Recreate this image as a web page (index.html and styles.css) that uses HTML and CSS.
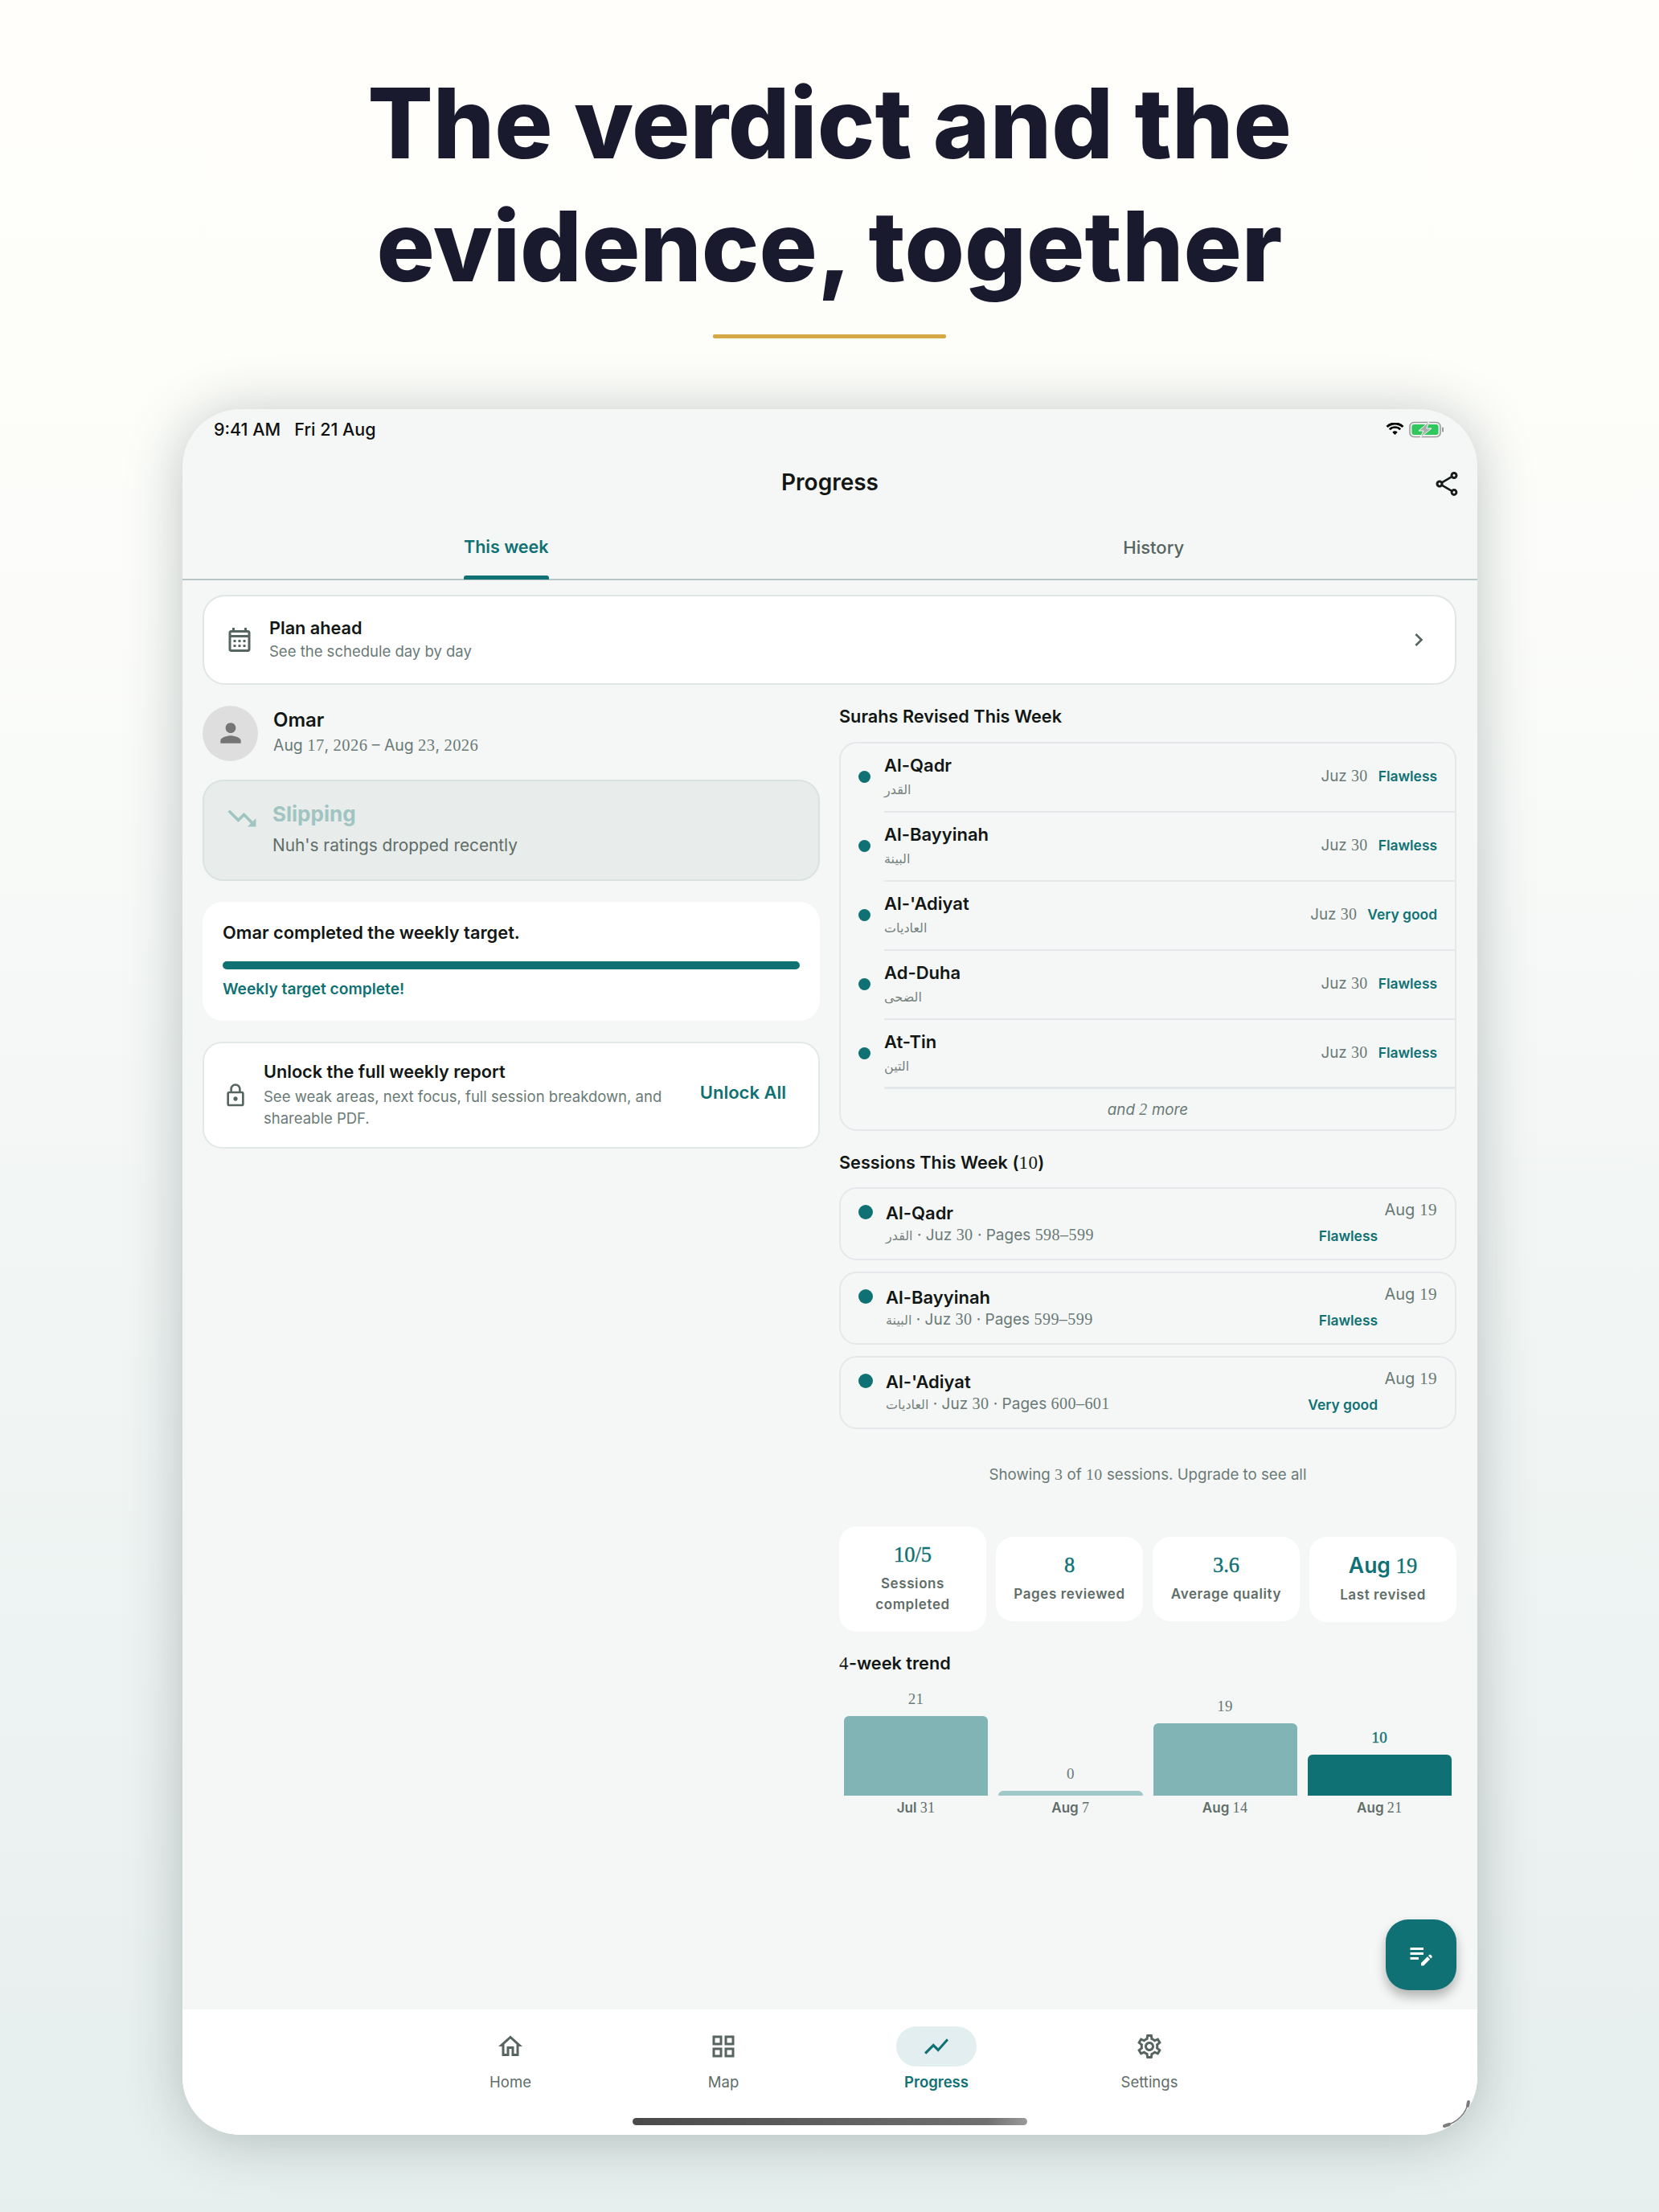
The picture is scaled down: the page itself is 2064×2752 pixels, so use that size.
FILE: index.html
```html
<!DOCTYPE html>
<html lang="en">
<head>
<meta charset="utf-8">
<title>Progress</title>
<link rel="stylesheet" href="styles.css">
</head>
<body>
<header class="hero">
  <h1 class="headline">The verdict and the<br>evidence, together</h1>
  <div class="rule"></div>
</header>
<main class="tablet">
  <div class="status">
    <span class="status-time">9:41 AM&nbsp;&nbsp;&nbsp;Fri 21 Aug</span>
    <span class="status-icons">
      <svg class="wifi" viewBox="0 0 24 17" width="23" height="16"><path d="M12 16l-3.400-3.600a4.800 4.800 0 0 1 6.800 0zM5.900 9.800l-2-2a11.400 11.400 0 0 1 16.200 0l-2 2a8.600 8.600 0 0 0-12.200 0zM2.600 6.400L.3 4.200a16.600 16.600 0 0 1 23.400 0l-2.300 2.200a13.400 13.400 0 0 0-18.800 0z" fill="#000"/></svg>
      <svg class="battery" viewBox="0 0 44 21" width="44" height="21"><rect x="1" y="1.500" width="38" height="18" rx="5" fill="none" stroke="#9a9a9a" stroke-width="1.600"/><rect x="3.400" y="3.900" width="33.200" height="13.200" rx="3" fill="#30c75e"/><rect x="41" y="7.500" width="2" height="6" rx="1" fill="#9a9a9a"/><path d="M25 0.500L12 12h6l-4 8.500L28 9h-6z" fill="#a9b0ac" stroke="#f5f7f6" stroke-width="1"/></svg>
    </span>
  </div>
  <div class="appbar">
    <span class="appbar-title">Progress</span>
    <svg class="share" viewBox="0 0 24 24" width="36" height="36" fill="#171c1b"><path d="M18 16.080c-.76 0-1.440.3-1.960.77L8.910 12.700c.05-.23.09-.46.09-.7s-.04-.47-.09-.7l7.050-4.110c.54.5 1.250.81 2.040.81 1.660 0 3-1.340 3-3s-1.340-3-3-3-3 1.340-3 3c0 .24.04.47.09.7L8.040 9.810C7.500 9.310 6.790 9 6 9c-1.660 0-3 1.340-3 3s1.340 3 3 3c.79 0 1.500-.31 2.040-.81l7.120 4.160c-.05.21-.08.43-.08.65 0 1.610 1.310 2.920 2.920 2.920s2.920-1.310 2.920-2.920c0-1.610-1.310-2.920-2.920-2.920zM18 4c.55 0 1 .45 1 1s-.45 1-1 1-1-.45-1-1 .45-1 1-1zM6 13c-.55 0-1-.45-1-1s.45-1 1-1 1 .45 1 1-.45 1-1 1zm12 7.020c-.55 0-1-.45-1-1s.45-1 1-1 1 .45 1 1-.45 1-1 1z"/></svg>
  </div>
  <nav class="tabs">
    <div class="tab tab-on"><span class="tab-label">This week<i class="tab-bar"></i></span></div>
    <div class="tab"><span class="tab-label">History</span></div>
  </nav>
  <section class="content">
    <a class="plan">
      <svg class="plan-icon" viewBox="0 0 24 24" width="36" height="36" fill="#56655f"><path d="M19 4h-1V2h-2v2H8V2H6v2H5c-1.100 0-2 .9-2 2v14c0 1.100.9 2 2 2h14c1.100 0 2-.9 2-2V6c0-1.100-.9-2-2-2zm0 16H5V10h14v10zm0-12H5V6h14v2zM9 14H7v-2h2v2zm4 0h-2v-2h2v2zm4 0h-2v-2h2v2zm-8 4H7v-2h2v2zm4 0h-2v-2h2v2zm4 0h-2v-2h2v2z"/></svg>
      <span class="plan-text">
        <span class="plan-title">Plan ahead</span>
        <span class="plan-sub">See the schedule day by day</span>
      </span>
      <svg class="chev" viewBox="0 0 24 24" width="32" height="32" fill="#56655f"><path d="M10 6L8.590 7.410 13.170 12l-4.580 4.590L10 18l6-6z"/></svg>
    </a>
    <div class="columns">
      <div class="col-left">
        <div class="person">
          <span class="avatar"><svg viewBox="0 0 24 24" width="38" height="38" fill="#757575"><path d="M12 12c2.210 0 4-1.790 4-4s-1.790-4-4-4-4 1.790-4 4 1.790 4 4 4zm0 2c-2.670 0-8 1.340-8 4v2h16v-2c0-2.660-5.330-4-8-4z"/></svg></span>
          <span class="person-text">
            <span class="person-name">Omar</span>
            <span class="person-date">Aug <b class="num">17</b>, <b class="num">2026</b> – Aug <b class="num">23</b>, <b class="num">2026</b></span>
          </span>
        </div>
        <div class="slip">
          <svg class="slip-icon" viewBox="0 0 24 24" width="42" height="42" fill="#a0c4c2"><path d="M16 18l2.290-2.290-4.880-4.880-4 4L2 7.410 3.410 6l6 6 4-4 6.300 6.290L22 12v6z"/></svg>
          <div class="slip-text">
            <div class="slip-title">Slipping</div>
            <div class="slip-sub">Nuh's ratings dropped recently</div>
          </div>
        </div>
        <div class="target">
          <div class="target-title">Omar completed the weekly target.</div>
          <div class="target-bar"></div>
          <div class="target-note">Weekly target complete!</div>
        </div>
        <div class="unlock">
          <svg class="lock" viewBox="0 0 24 24" width="32" height="32" fill="#56655f"><path d="M12 17c1.100 0 2-.9 2-2s-.9-2-2-2-2 .9-2 2 .9 2 2 2zm6-9h-1V6c0-2.760-2.240-5-5-5S7 3.240 7 6v2H6c-1.100 0-2 .9-2 2v10c0 1.100.9 2 2 2h12c1.100 0 2-.9 2-2V10c0-1.100-.9-2-2-2zM8.900 6c0-1.710 1.390-3.100 3.100-3.100s3.100 1.390 3.100 3.100v2H8.900V6zM18 20H6V10h12v10z"/></svg>
          <div class="unlock-text">
            <div class="unlock-title">Unlock the full weekly report</div>
            <div class="unlock-sub">See weak areas, next focus, full session breakdown, and shareable PDF.</div>
          </div>
          <span class="unlock-cta">Unlock All</span>
        </div>
      </div>
      <div class="col-right">
        <h2 class="section-title">Surahs Revised This Week</h2>
        <div class="surahs">
          <div class="surah"><i class="dot"></i><div class="surah-text"><div class="surah-name">Al-Qadr</div><div class="surah-ar" dir="rtl">القدر</div></div><span class="juz">Juz <b class="num">30</b></span><span class="grade">Flawless</span></div>
          <div class="surah"><i class="dot"></i><div class="surah-text"><div class="surah-name">Al-Bayyinah</div><div class="surah-ar" dir="rtl">البينة</div></div><span class="juz">Juz <b class="num">30</b></span><span class="grade">Flawless</span></div>
          <div class="surah"><i class="dot"></i><div class="surah-text"><div class="surah-name">Al-'Adiyat</div><div class="surah-ar" dir="rtl">العاديات</div></div><span class="juz">Juz <b class="num">30</b></span><span class="grade">Very good</span></div>
          <div class="surah"><i class="dot"></i><div class="surah-text"><div class="surah-name">Ad-Duha</div><div class="surah-ar" dir="rtl">الضحى</div></div><span class="juz">Juz <b class="num">30</b></span><span class="grade">Flawless</span></div>
          <div class="surah surah-last"><i class="dot"></i><div class="surah-text"><div class="surah-name">At-Tin</div><div class="surah-ar" dir="rtl">التين</div></div><span class="juz">Juz <b class="num">30</b></span><span class="grade">Flawless</span></div>
          <div class="more">and <b class="num">2</b> more</div>
        </div>
        <h2 class="section-title sessions-title">Sessions This Week (<b class="num">10</b>)</h2>
        <div class="sessions">
          <div class="session"><i class="dot dot-lg"></i><div class="session-text"><div class="session-name">Al-Qadr</div><div class="session-sub"><span class="ar">القدر</span> · Juz <b class="num">30</b> · Pages <b class="num">598–599</b></div></div><div class="session-side"><span class="session-date">Aug <b class="num">19</b></span><span class="session-grade">Flawless</span></div></div>
          <div class="session"><i class="dot dot-lg"></i><div class="session-text"><div class="session-name">Al-Bayyinah</div><div class="session-sub"><span class="ar">البينة</span> · Juz <b class="num">30</b> · Pages <b class="num">599–599</b></div></div><div class="session-side"><span class="session-date">Aug <b class="num">19</b></span><span class="session-grade">Flawless</span></div></div>
          <div class="session"><i class="dot dot-lg"></i><div class="session-text"><div class="session-name">Al-'Adiyat</div><div class="session-sub"><span class="ar">العاديات</span> · Juz <b class="num">30</b> · Pages <b class="num">600–601</b></div></div><div class="session-side"><span class="session-date">Aug <b class="num">19</b></span><span class="session-grade">Very good</span></div></div>
        </div>
        <p class="showing">Showing <b class="num">3</b> of <b class="num">10</b> sessions. Upgrade to see all</p>
        <div class="stats">
          <div class="stat"><div class="stat-value stat-digits num">10/5</div><div class="stat-label">Sessions completed</div></div>
          <div class="stat"><div class="stat-value stat-digits num">8</div><div class="stat-label">Pages reviewed</div></div>
          <div class="stat"><div class="stat-value stat-digits num">3.6</div><div class="stat-label">Average quality</div></div>
          <div class="stat"><div class="stat-value">Aug <b class="num stat-digits">19</b></div><div class="stat-label">Last revised</div></div>
        </div>
        <h2 class="section-title trend-title"><b class="num">4</b>-week trend</h2>
        <div class="chart">
          <div class="bar-col"><span class="bar-val num">21</span><div class="bar" style="height:99px"></div><span class="bar-label">Jul <b class="num">31</b></span></div>
          <div class="bar-col"><span class="bar-val num">0</span><div class="bar bar-zero" style="height:6px"></div><span class="bar-label">Aug <b class="num">7</b></span></div>
          <div class="bar-col"><span class="bar-val num">19</span><div class="bar" style="height:90px"></div><span class="bar-label">Aug <b class="num">14</b></span></div>
          <div class="bar-col"><span class="bar-val bar-val-now num">10</span><div class="bar bar-now" style="height:51px"></div><span class="bar-label">Aug <b class="num">21</b></span></div>
        </div>
      </div>
    </div>
    <button class="fab" aria-label="Log session"><svg viewBox="0 0 24 24" width="36" height="36" fill="#fff"><path d="M3 10h11v2H3v-2zm0-2h11V6H3v2zm0 8h7v-2H3v2zm15.010-3.130.71-.71c.39-.39 1.020-.39 1.410 0l.71.71c.39.39.39 1.020 0 1.410l-.71.71-2.120-2.120zm-.71.71-5.300 5.300V21h2.120l5.300-5.300-2.120-2.120z"/></svg></button>
  </section>
  <nav class="bottom">
    <div class="nav-item">
      <span class="nav-icon"><svg viewBox="0 0 24 24" width="36" height="36" fill="#56655f"><path d="M12 5.690l5 4.500V18h-2v-6H9v6H7v-7.810l5-4.500M12 3L2 12h3v8h6v-6h2v6h6v-8h3L12 3z"/></svg></span>
      <span class="nav-label">Home</span>
    </div>
    <div class="nav-item">
      <span class="nav-icon"><svg viewBox="0 0 24 24" width="36" height="36" fill="#56655f"><path d="M3 3v8h8V3H3zm6 6H5V5h4v4zm-6 4v8h8v-8H3zm6 6H5v-4h4v4zm4-16v8h8V3h-8zm6 6h-4V5h4v4zm-6 4v8h8v-8h-8zm6 6h-4v-4h4v4z"/></svg></span>
      <span class="nav-label">Map</span>
    </div>
    <div class="nav-item nav-on">
      <span class="nav-icon"><svg viewBox="0 0 24 24" width="36" height="36" fill="#0f7173"><path d="M3.500 18.490l6-6.010 4 4L22 6.920l-1.410-1.410-7.090 7.970-4-4L2 16.990z"/></svg></span>
      <span class="nav-label">Progress</span>
    </div>
    <div class="nav-item">
      <span class="nav-icon"><svg viewBox="0 0 24 24" width="36" height="36" fill="#56655f"><path d="M19.430 12.980c.04-.32.07-.64.07-.98 0-.34-.03-.66-.07-.98l2.110-1.650c.19-.15.24-.42.12-.64l-2-3.460c-.09-.16-.26-.25-.44-.25-.06 0-.12.01-.17.03l-2.490 1c-.52-.4-1.080-.73-1.690-.98l-.38-2.650C14.460 2.180 14.250 2 14 2h-4c-.25 0-.46.18-.49.42l-.38 2.650c-.61.25-1.170.59-1.690.98l-2.490-1c-.06-.02-.12-.03-.18-.03-.17 0-.34.09-.43.25l-2 3.460c-.13.22-.07.49.12.64l2.110 1.650c-.04.32-.07.65-.07.98 0 .33.03.66.07.98l-2.110 1.650c-.19.15-.24.42-.12.64l2 3.460c.09.16.26.25.44.25.06 0 .12-.01.17-.03l2.490-1c.52.4 1.080.73 1.690.98l.38 2.650c.03.24.24.42.49.42h4c.25 0 .46-.18.49-.42l.38-2.650c.61-.25 1.170-.59 1.690-.98l2.490 1c.06.02.12.03.18.03.17 0 .34-.09.43-.25l2-3.460c.12-.22.07-.49-.12-.64l-2.110-1.650zm-1.980-1.710c.04.31.05.52.05.73 0 .21-.02.43-.05.73l-.14 1.130.89.7 1.080.84-.7 1.210-1.270-.51-1.040-.42-.9.68c-.43.32-.84.56-1.250.73l-1.060.43-.16 1.130-.2 1.350h-1.400l-.19-1.350-.16-1.130-1.060-.43c-.43-.18-.83-.41-1.230-.71l-.91-.7-1.060.43-1.270.51-.7-1.210 1.080-.84.89-.7-.14-1.130c-.03-.31-.05-.54-.05-.74s.02-.43.05-.73l.14-1.130-.89-.7-1.080-.84.7-1.210 1.270.51 1.040.42.9-.68c.43-.32.84-.56 1.250-.73l1.060-.43.16-1.130.2-1.350h1.390l.19 1.350.16 1.130 1.060.43c.43.18.83.41 1.230.71l.91.7 1.060-.43 1.270-.51.7 1.210-1.070.85-.89.7.14 1.130zM12 8c-2.210 0-4 1.790-4 4s1.790 4 4 4 4-1.790 4-4-1.790-4-4-4zm0 6c-1.100 0-2-.9-2-2s.9-2 2-2 2 .9 2 2-.9 2-2 2z"/></svg></span>
      <span class="nav-label">Settings</span>
    </div>
  </nav>
  <div class="home-bar"></div>
  <svg class="corner" viewBox="0 0 36 36" width="36" height="36" fill="none" stroke="#7d7d7d" stroke-linecap="round"><path d="M33 3Q28 26 3 33" stroke-width="1.500"/><path d="M33 3l-1 5M3 33l6-2" stroke-width="4"/></svg>
</main>
</body>
</html>
```
FILE: styles.css
```css
* { box-sizing: border-box; }
html, body { margin: 0; padding: 0; }
body {
  width: 2064px;
  height: 2752px;
  overflow: hidden;
  background: linear-gradient(180deg, #fffefa 0%, #fcfdfa 25%, #f4f7f6 50%, #e6efee 100%);
  font-family: Inter, "Noto Sans", sans-serif;
  color: #121715;
}
.num { font-family: "Liberation Serif", serif; font-size: 1.06em; font-weight: 400; letter-spacing: .4px; }

.hero { display: flex; flex-direction: column; align-items: center; padding-top: 77px; }
.headline {
  margin: 0;
  font-family: Inter, sans-serif;
  font-weight: 800;
  font-size: 120.500px;
  line-height: 153px;
  letter-spacing: 0;
  color: #1a1a2e;
  text-align: center;
}
.rule { width: 290px; height: 5px; margin-top: 33px; border-radius: 2px; background: #d4a843; }

.tablet {
  position: relative;
  width: 1611px;
  height: 2147px;
  margin: 88px 0 0 227px;
  display: flex;
  flex-direction: column;
  border-radius: 72px;
  background: #f5f7f6;
  box-shadow: 0 6px 70px rgba(30, 50, 50, .28);
  overflow: hidden;
}
.status { display: flex; justify-content: space-between; align-items: center; height: 50px; padding: 0 41px 0 39px; }
.status-time { font-size: 21.500px; font-weight: 500; color: #111; }
.status-icons { display: flex; align-items: center; gap: 6px; }

.appbar { position: relative; height: 76px; display: flex; align-items: center; justify-content: center; padding-top: 6px; }
.appbar-title { font-size: 28px; font-weight: 600; color: #121715; }
.share { position: absolute; right: 20px; top: 25px; }

.tabs { display: flex; height: 87px; border-bottom: 2px solid #b9c5c5; }
.tab { flex: 1; display: flex; justify-content: center; padding-top: 33px; font-size: 22px; font-weight: 500; line-height: 27px; color: #56655f; }
.tab-on { color: #0f7173; font-size: 21.500px; font-weight: 600; padding-top: 32px; }
.tab-label { position: relative; height: 54px; }
.tab-bar { position: absolute; left: 0; right: 0; bottom: 0; height: 5px; border-radius: 3px 3px 0 0; background: #0f7173; }

.content { position: relative; flex: 1; padding: 18px 26px 0 25px; min-height: 0; }
.plan {
  display: flex; align-items: center; height: 112px; padding: 0 29px 0 26px;
  background: #fff; border: 2px solid #dfe6e5; border-radius: 28px;
}
.plan-text { display: flex; flex-direction: column; gap: 3px; margin-left: 19px; padding-bottom: 4px; flex: 1; }
.plan-title { font-size: 21.700px; font-weight: 600; line-height: 28px; }
.plan-sub { font-size: 18.500px; line-height: 24px; color: #6a7a76; }

.columns { display: grid; grid-template-columns: 1fr 1fr; gap: 24px; margin-top: 18px; }
.col-left { display: flex; flex-direction: column; }
.col-right { padding-top: 7px; }

.person { display: flex; align-items: center; gap: 19px; height: 70px; margin-top: 7px; }
.avatar { width: 69px; height: 69px; border-radius: 50%; background: #dedede; display: flex; align-items: center; justify-content: center; }
.person-text { display: flex; flex-direction: column; gap: 3px; padding-bottom: 3px; }
.person-name { font-size: 24px; font-weight: 600; line-height: 30px; }
.person-date { font-size: 19.400px; line-height: 26px; color: #6a7a76; }

.slip {
  display: flex; gap: 17px; height: 126px; margin-top: 23px; padding: 25px 26px;
  background: #e8ecea; border: 2px solid #dbe3e1; border-radius: 26px;
}
.slip-icon { flex: none; }
.slip-text { display: flex; flex-direction: column; gap: 9px; }
.slip-title { font-size: 26px; font-weight: 700; line-height: 32px; color: #a0c4c2; }
.slip-sub { font-size: 20.800px; line-height: 28px; color: #5f6d69; }

.target { height: 148px; margin-top: 26px; padding: 24px 25px; background: #fff; border-radius: 26px; }
.target-title { font-size: 21.800px; font-weight: 600; line-height: 28px; }
.target-bar { height: 10px; margin-top: 22px; border-radius: 5px; background: #0f7173; }
.target-note { margin-top: 12px; font-size: 19.200px; font-weight: 600; line-height: 24px; color: #0f7173; }

.unlock {
  display: flex; align-items: center; height: 133px; margin-top: 26px; padding: 0 40px 0 23px;
  background: #fff; border: 2px solid #e3e8e8; border-radius: 24px;
}
.lock { flex: none; }
.unlock-text { flex: 1; margin-left: 19px; margin-top: -2px; }
.unlock-title { font-size: 21.700px; font-weight: 600; line-height: 28px; }
.unlock-sub { width: 510px; margin-top: 4px; font-size: 18.500px; line-height: 27px; color: #6a7a76; }
.unlock-cta { font-size: 22px; font-weight: 600; color: #0f7173; margin-bottom: 8px; }

.section-title { margin: 0; font-size: 21.700px; font-weight: 600; line-height: 28px; color: #121715; }
.surahs { margin-top: 18px; border: 2px solid #e4e8ea; border-radius: 22px; overflow: hidden; }
.surah { display: flex; align-items: center; height: 86px; padding: 0 0 6px 22px; position: relative; }
.surah::after { content: ""; position: absolute; left: 54px; right: 0; bottom: 0; height: 2px; background: #e4e8ea; }
.surah-last::after { height: 3px; }
.dot { flex: none; width: 15px; height: 15px; border-radius: 50%; background: #0f7173; margin-top: 2px; }
.surah-text { flex: 1; margin-left: 17px; }
.surah-name { font-size: 22px; font-weight: 600; line-height: 28px; }
.surah-ar { margin-top: 5px; font-family: "Noto Sans", "DejaVu Sans", sans-serif; font-size: 16px; line-height: 22px; color: #75827e; display: table; direction: rtl; }
.juz { font-size: 18.800px; color: #6a7a76; margin-right: 13px; }
.grade { font-size: 17.400px; font-weight: 600; color: #0f7173; margin-right: 22px; }
.more { height: 50px; line-height: 50px; text-align: center; font-size: 18.800px; font-style: italic; color: #6a7a76; }

.sessions-title { margin-top: 25px; }
.sessions { display: flex; flex-direction: column; gap: 14px; margin-top: 16px; }
.session { display: flex; align-items: flex-start; height: 91px; padding: 16px 22px 0 22px; border: 2px solid #e4e8ea; border-radius: 22px; }
.dot-lg { width: 18px; height: 18px; margin-top: 4px; }
.session-text { flex: 1; margin-left: 16px; }
.session-name { font-size: 22px; font-weight: 600; line-height: 28px; }
.session-sub { margin-top: 0; font-size: 19px; line-height: 26px; color: #6a7a76; }
.ar { font-family: "Noto Sans", "DejaVu Sans", sans-serif; font-size: 16px; color: #75827e; }
.session-side { display: flex; flex-direction: column; align-items: flex-end; }
.session-date { font-size: 20px; line-height: 26px; color: #6a7a76; margin-top: -3px; }
.session-grade { font-size: 17.400px; font-weight: 600; line-height: 24px; color: #0f7173; margin: 8px 74px 0 0; }

.showing { margin: 43px 0 0; font-size: 18.700px; line-height: 26px; text-align: center; color: #6a7a76; }

.stats { display: grid; grid-template-columns: repeat(4, 1fr); gap: 12px; align-items: center; margin-top: 51px; }
.stat { display: flex; flex-direction: column; align-items: center; padding: 17px 10px 21px; background: #fff; border-radius: 22px; text-align: center; }
.stat-value { font-size: 26.500px; font-weight: 600; line-height: 36px; color: #0f7173; }
.stat-digits { font-size: 26.500px; font-weight: 400; letter-spacing: 0; -webkit-text-stroke: .4px #0f7173; }
.stat-label { margin-top: 5px; font-size: 17px; font-weight: 600; line-height: 26px; color: #5f6d69; letter-spacing: .6px; }

.trend-title { margin-top: 25px; }
.chart { display: grid; grid-template-columns: repeat(4, 1fr); gap: 13px; height: 142px; margin-top: 8px; padding: 0 6px; }
.bar-col { display: flex; flex-direction: column; align-items: center; justify-content: flex-end; }
.bar-val { font-size: 19px; line-height: 26px; color: #6a7a76; margin-bottom: 8px; }
.bar-val-now { color: #0f7173; -webkit-text-stroke: .4px #0f7173; }
.bar { width: 100%; background: #81b4b4; border-radius: 6px 6px 0 0; }
.bar-zero { background: #a0c8c8; }
.bar-now { background: #0f7173; }
.bar-label { height: 0; overflow: visible; line-height: 30px; font-size: 17px; font-weight: 600; color: #5f6d69; }

.fab {
  position: absolute; right: 26px; bottom: 24px; width: 88px; height: 88px;
  display: flex; align-items: center; justify-content: center; padding: 0;
  border: none; border-radius: 28px; background: #0f7173;
  box-shadow: 0 8px 14px rgba(0, 0, 0, .28);
}

.bottom { flex: none; display: grid; grid-template-columns: repeat(4, 265px); justify-content: center; height: 156px; padding-top: 21px; background: #fff; }
.nav-item { display: flex; flex-direction: column; align-items: center; }
.nav-icon { width: 100px; height: 50px; border-radius: 25px; display: flex; align-items: center; justify-content: center; }
.nav-on .nav-icon { background: #e2eeef; }
.nav-label { margin-top: 6px; font-size: 18.500px; line-height: 26px; color: #5f6d69; }
.nav-on .nav-label { color: #0f7173; font-weight: 600; }

.home-bar { position: absolute; left: 560px; bottom: 12px; width: 491px; height: 9px; border-radius: 5px; background: linear-gradient(90deg, #4a4a4a, #707070 90%, #9a9a9a); }
.corner { position: absolute; right: 8px; bottom: 8px; }
```
